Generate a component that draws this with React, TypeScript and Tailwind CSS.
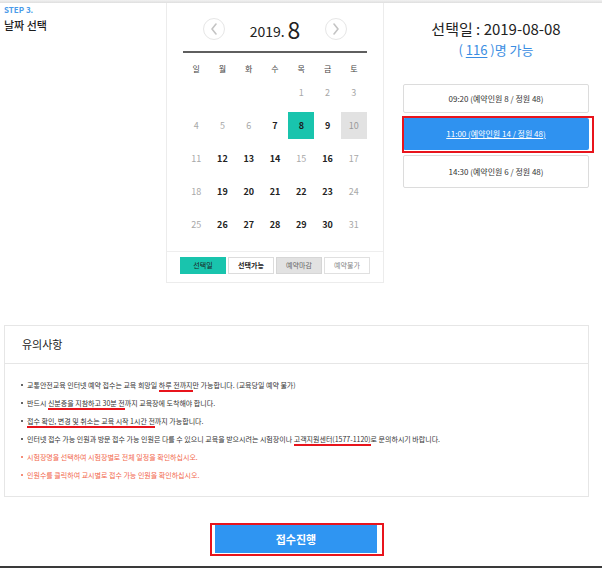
import React from "react";

// Step 3 of the booking flow: pick a day on the calendar, then a time slot.

const FONT = { fontFamily: '"Noto Sans CJK KR", "Noto Sans", sans-serif' };

const WEEKDAYS = ["일", "월", "화", "수", "목", "금", "토"];
const AVAILABLE = new Set([7, 9, 12, 13, 14, 16, 19, 20, 21, 22, 23, 26, 27, 28, 29, 30]);
const SELECTED = 8;
const CLOSED = new Set([10]);

// August 2019 starts on a Thursday
const WEEKS: (number | null)[][] = [
  [null, null, null, null, 1, 2, 3],
  [4, 5, 6, 7, 8, 9, 10],
  [11, 12, 13, 14, 15, 16, 17],
  [18, 19, 20, 21, 22, 23, 24],
  [25, 26, 27, 28, 29, 30, 31],
];

const SLOTS = [
  { label: "09:20 (예약인원 8 / 정원 48)", active: false, h: "h-[29px]" },
  { label: "11:00 (예약인원 14 / 정원 48)", active: true, h: "h-[32px]" },
  { label: "14:30 (예약인원 6 / 정원 48)", active: false, h: "h-[33px]" },
];

function NavCircle({ dir }: { dir: "prev" | "next" }) {
  return (
    <button className="flex h-[22px] w-[22px] items-center justify-center rounded-full border border-[#e6e6e6] bg-white">
      <svg width="8" height="12" viewBox="0 0 8 12" fill="none">
        <polyline
          points={dir === "prev" ? "6,1 2,6 6,11" : "2,1 6,6 2,11"}
          stroke="#c4c4c4"
          strokeWidth="1.6"
          strokeLinecap="round"
          strokeLinejoin="round"
        />
      </svg>
    </button>
  );
}

function DayCell({ day }: { day: number | null }) {
  if (day == null) return <div className="h-[33px]" />;
  let cls = "text-[#a8a8a8]";
  if (day === SELECTED) cls = "bg-[#19c4ad] font-bold text-[#1c1c1c]";
  else if (CLOSED.has(day)) cls = "bg-[#e2e2e2] text-[#9a9a9a]";
  else if (AVAILABLE.has(day)) cls = "font-bold text-[#222]";
  return (
    <div className="flex h-[33px] items-center">
      <div className={`flex h-[27px] w-full items-center justify-center text-[9px] ${cls}`}>{day}</div>
    </div>
  );
}

function Calendar() {
  return (
    <div className="flex h-[280px] w-[218px] flex-col border-x border-b border-[#ececec]">
      <div className="mx-[16px] pt-[15px]">
        <div className="flex h-[22px] items-center justify-center">
          <NavCircle dir="prev" />
          <div className="flex h-[22px] w-[100px] items-center justify-center gap-[3px] leading-none text-[#222]">
            <span className="mt-[3px] text-[14px]">2019.</span>
            <span className="text-[23px]">8</span>
          </div>
          <NavCircle dir="next" />
        </div>
        <div className="mt-[11px] h-[2px] bg-[#5f5f5f]" />
        <div className="mt-[9px] grid h-[14px] grid-cols-7 items-center text-center text-[8px] leading-none text-[#444]">
          {WEEKDAYS.map((w) => (
            <span key={w}>{w}</span>
          ))}
        </div>
        <div className="grid grid-cols-7">
          {WEEKS.flat().map((d, i) => (
            <DayCell key={i} day={d} />
          ))}
        </div>
      </div>
      <div className="mt-[10px] flex justify-center gap-[2px] border-t border-[#eeeeee] pt-[5px] text-[7px]">
        <span className="flex h-[17px] w-[46px] items-center justify-center bg-[#19c4ad] text-[#1c1c1c]">선택일</span>
        <span className="flex h-[17px] w-[46px] items-center justify-center border border-[#dcdcdc] font-bold text-[#222]">선택가능</span>
        <span className="flex h-[17px] w-[46px] items-center justify-center border border-[#d6d6d6] bg-[#e2e2e2] text-[#666]">예약마감</span>
        <span className="flex h-[17px] w-[46px] items-center justify-center border border-[#e0e0e0] text-[#888]">예약불가</span>
      </div>
    </div>
  );
}

function TimeSlots() {
  return (
    <div className="flex-1 pr-[13px] pl-[19px]">
      <div className="pt-[16px] text-center text-[15px] leading-[20px] text-[#222]">선택일 : 2019-08-08</div>
      <div className="mt-[2px] text-center text-[13px] leading-[18px] text-[#3a8de2]">
        ( <span className="underline underline-offset-2">116</span> )명 가능
      </div>
      <div className="mt-[25px] flex flex-col gap-[5px]">
        {SLOTS.map((s) =>
          s.active ? (
            <div key={s.label} className={`relative flex ${s.h} items-center justify-center rounded-[2px] bg-[#2f92f0] text-[8px] text-white underline`}>
              {s.label}
              <span className="absolute -top-[2px] -right-[5px] -bottom-[3px] -left-[1px] border-2 border-[#e8141c]" />
            </div>
          ) : (
            <div key={s.label} className={`flex ${s.h} items-center justify-center rounded-[2px] border border-[#dcdcdc] text-[8px] text-[#333]`}>
              {s.label}
            </div>
          )
        )}
      </div>
    </div>
  );
}

function Mark({ children }: { children: React.ReactNode }) {
  return <span className="border-b-2 border-[#e8141c]">{children}</span>;
}

function Notice() {
  const items: { node: React.ReactNode; red?: boolean }[] = [
    {
      node: (
        <>
          교통안전교육 인터넷 예약 접수는 교육 희망일 <Mark>하루 전까지</Mark>만 가능합니다. (교육당일 예약 불가)
        </>
      ),
    },
    {
      node: (
        <>
          반드시 <Mark>신분증을 지참하고 30분 전</Mark>까지 교육장에 도착해야 합니다.
        </>
      ),
    },
    {
      node: (
        <>
          <Mark>접수 확인, 변경 및 취소는 교육 시작 1시간 전</Mark>까지 가능합니다.
        </>
      ),
    },
    {
      node: (
        <>
          인터넷 접수 가능 인원과 방문 접수 가능 인원은 다를 수 있으니 교육을 받으시려는 시험장이나{" "}
          <Mark>고객지원센터(1577-1120)</Mark>로 문의하시기 바랍니다.
        </>
      ),
    },
    { node: "시험장명을 선택하여 시험장별로 전체 일정을 확인하십시오.", red: true },
    { node: "인원수를 클릭하여 교시별로 접수 가능 인원을 확인하십시오.", red: true },
  ];

  return (
    <div className="mt-[42px] ml-[4px] w-[585px] border border-[#e6e6e6]">
      <div className="flex h-[38px] items-center border-b border-[#e6e6e6] px-[17px] text-[11px] text-[#222]">유의사항</div>
      <ul className="pt-[12px] pb-[12px] pl-[16px]">
        {items.map((it, i) => (
          <li key={i} className={`flex h-[18px] items-center text-[7px] ${it.red ? "text-[#f2674c]" : "text-[#333]"}`}>
            <span className={`mr-[4px] h-[2px] w-[2px] shrink-0 rounded-full ${it.red ? "bg-[#f2674c]" : "bg-[#333]"}`} />
            <span className="whitespace-nowrap">{it.node}</span>
          </li>
        ))}
      </ul>
    </div>
  );
}

export default function App() {
  return (
    <div className="flex h-[568px] w-[602px] flex-col overflow-hidden bg-white" style={FONT}>
      <div className="h-[3px] bg-gradient-to-b from-[#f2f2f2] to-[#dedede]" />
      <div className="flex">
        <div className="w-[166px] pt-[2px] pl-[4px]">
          <div className="text-[8px] leading-[10px] font-bold text-[#4a9be9]">STEP 3.</div>
          <div className="mt-[2px] text-[11px] font-medium text-[#1c1c1c]">날짜 선택</div>
        </div>
        <Calendar />
        <TimeSlots />
      </div>
      <Notice />
      <div className="mt-[28px] pl-[215px]">
        <button className="relative flex h-[28px] w-[162px] items-center justify-center bg-[#2f95f2] text-[11px] font-bold text-white">
          접수진행
          <span className="absolute -top-[2px] -right-[7px] -bottom-[3px] -left-[5px] border-2 border-[#e8141c]" />
        </button>
      </div>
      <div className="mt-auto h-[2px] bg-[#3a3a3a]" />
    </div>
  );
}
